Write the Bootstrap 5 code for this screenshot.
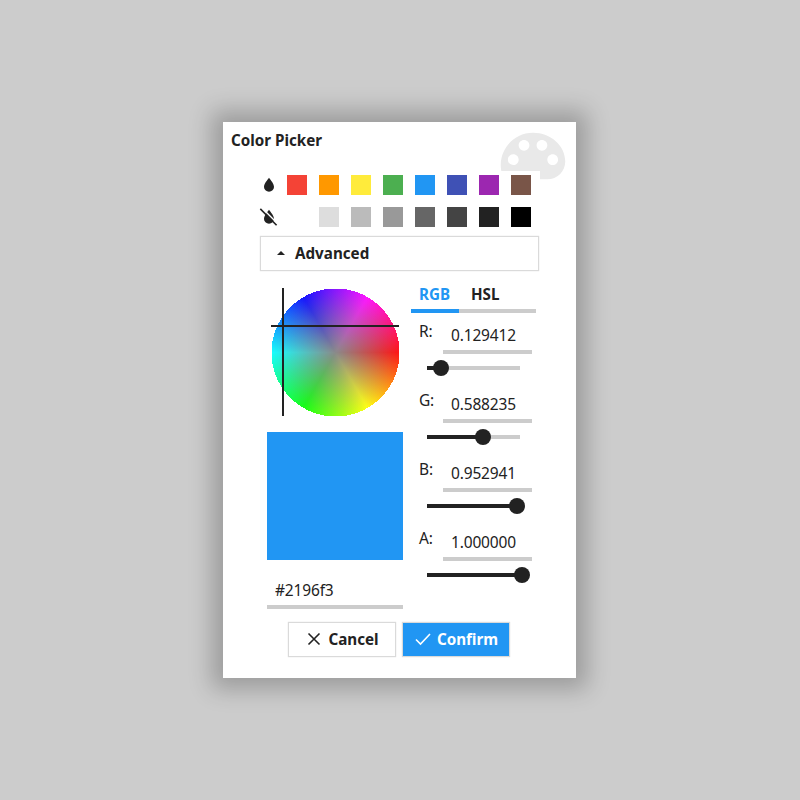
<!DOCTYPE html>
<html lang="en">
<head>
<meta charset="utf-8">
<meta name="viewport" content="width=device-width, initial-scale=1">
<title>Color Picker</title>
<link href="https://cdn.jsdelivr.net/npm/bootstrap@5.3.0/dist/css/bootstrap.min.css" rel="stylesheet">
<style>
  body { background: #ccc; color: #222; font: 15.5px/20px "Noto Sans", sans-serif; letter-spacing: -.16px; }
  .dialog { width: 353px; height: 556px; margin-right: 1px; background: #fff; box-shadow: 0 0 22px 11px rgba(0,0,0,.24); padding: 8px; }
  .dialog-title { font-size: 15.2px; line-height: 20px; font-weight: 700; margin: 0; height: 41px; letter-spacing: 0; }
  .palette-mark { position: absolute; top: 0; right: 0; width: 86px; height: 86px; fill: #e9e9e9; }
  .swatches { width: 287px; background: #fff; margin-left: 22px; height: 64px; }
  .cell { flex: 0 0 32px; height: 32px; padding: 4px 2px 8px; }
  .cell-icon { padding-left: 6px; }
  .cell svg { width: 20px; height: 20px; display: block; overflow: visible; }
  .chip { width: 20px; height: 20px; border: 0; padding: 0; display: block; }
  .key { height: 35px; border: 1px solid #dadada; border-radius: 0; box-shadow: 0 0 1px rgba(0,0,0,.18); font-size: 15.2px; line-height: 20px; font-weight: 700; letter-spacing: 0; color: #222; background: #fff; padding: 0 0 2px; }
  .key:hover { color: #222; border-color: #dadada; }
  .key-main, .key-main:hover { background: #2196f3; color: #fff; }
  .key-adv { width: 279px; margin: 1px 0 0 29px; padding-left: 10px; }
  .key-adv svg { width: 20px; height: 20px; margin-right: 4px; }
  .key-act { width: 108px; padding-right: 1px; }
  .key-act svg { width: 20px; height: 20px; margin-right: 4px; }
  .panels { margin: 17px 0 0 36px; height: 321px; }
  .left-col { width: 136px; }
  .wheel-box { width: 128px; height: 128px; margin-left: 4px; }
  .wheel { width: 128px; height: 128px;
    background: radial-gradient(circle 64px at 64.5px 64.5px, hsl(0,0%,54.1%), hsla(0,0%,54.1%,0)),
      conic-gradient(from 90deg at 64.5px 64.5px, hsl(0,100%,54.1%), hsl(60,100%,54.1%), hsl(120,100%,54.1%), hsl(180,100%,54.1%), hsl(240,100%,54.1%), hsl(300,100%,54.1%), hsl(360,100%,54.1%));
    -webkit-mask: radial-gradient(circle 64px at 64.5px 64.5px, #000 100%, transparent 100%);
    mask: radial-gradient(circle 64px at 64.5px 64.5px, #000 100%, transparent 100%); }
  .cross-v, .cross-h { position: absolute; background: #222; }
  .cross-v { left: 11px; top: 0; width: 2px; height: 128px; }
  .cross-h { left: 0; top: 37px; width: 128px; height: 2px; }
  .preview { height: 128px; margin-top: 16px; background: #2196f3; }
  .field { border: 0; border-bottom: 4px solid #ccc; border-radius: 0; padding: 0 8px; background: none; color: #222; font: inherit; letter-spacing: inherit; outline: 0; display: block; }
  .field-hex { width: 136px; height: 37px; margin-top: 12px; padding-top: 2px; }
  .right-col { width: 125px; margin-left: 8px; }
  .mode-tabs { height: 25px; border-bottom: 4px solid #ccc; font-size: 15.2px; letter-spacing: 0; }
  .mode-tabs a { color: #222; font-weight: 700; text-decoration: none; padding: 0 8px; height: 25px; line-height: 13px; margin-right: 4px; border-bottom: 4px solid transparent; }
  .mode-tabs a.on { color: #2196f3; border-color: #2196f3; width: 48px; }
  .channel { height: 69px; padding-left: 8px; }
  .channel label { width: 24px; padding-top: 8px; }
  .channel .field { width: 89px; height: 41px; padding-top: 7px; }
  .slide { width: 93px; height: 4px; margin: 12px 0 0 8px; background: #ccc; }
  .fill { height: 4px; background: #222; position: relative; }
  .fill::after { content: ""; position: absolute; right: -8px; top: -6px; width: 16px; height: 16px; border-radius: 50%; background: #222; }
  .actions { margin-top: 13px; gap: 6px; padding-right: 1px; }
</style>
</head>
<body class="vh-100 overflow-hidden d-flex align-items-center justify-content-center">
<main class="dialog position-relative">
  <svg class="palette-mark" viewBox="0 0 24 24"><path d="M12 3c-4.970 0-9 4.030-9 9s4.030 9 9 9c.83 0 1.500-.67 1.500-1.500 0-.39-.15-.74-.39-1.010-.23-.26-.38-.61-.38-.99 0-.83.67-1.500 1.500-1.500H16c2.760 0 5-2.240 5-5 0-4.420-4.030-8-9-8zm-5.500 9c-.83 0-1.500-.67-1.500-1.500S5.670 9 6.500 9 8 9.670 8 10.500 7.330 12 6.500 12zm3-4C8.670 8 8 7.330 8 6.500S8.670 5 9.500 5s1.500.67 1.500 1.500S10.330 8 9.500 8zm5 0c-.83 0-1.500-.67-1.500-1.500S13.670 5 14.500 5s1.500.67 1.500 1.500S15.330 8 14.500 8zm3 4c-.83 0-1.500-.67-1.500-1.500S16.670 9 17.500 9s1.500.67 1.500 1.500-.67 1.500-1.500 1.500z"/></svg>
  <h1 class="dialog-title">Color Picker</h1>
  <div class="swatches position-relative">
    <div class="d-flex" id="hues">
      <div class="cell cell-icon"><svg viewBox="0 0 20 20"><path fill="#222" d="M10 2.700C11.800 5.300 15 8.600 15 12A5 4.700 0 0 1 5 12C5 8.600 8.200 5.300 10 2.700z"/></svg></div>
    </div>
    <div class="d-flex" id="grays">
      <div class="cell cell-icon"><svg viewBox="0 0 20 20"><path fill="#222" d="M10 2.700C11.800 5.300 15 8.600 15 12A5 4.700 0 0 1 5 12C5 8.600 8.200 5.300 10 2.700z"/><path d="M3.500 1.500L18.500 16.500" stroke="#fff" stroke-width="1.400"/><path d="M1.300 1.900L17.600 18.200" stroke="#222" stroke-width="1.600"/></svg></div>
    </div>
  </div>
  <button class="btn key key-adv d-flex align-items-center"><svg viewBox="0 0 20 20"><path fill="#222" d="M6 12L10 8l4 4z"/></svg>Advanced</button>
  <div class="panels d-flex align-items-start">
    <div class="left-col">
      <div class="wheel-box position-relative"><div class="wheel"></div><div class="cross-v"></div><div class="cross-h"></div></div>
      <div class="preview"></div>
      <input class="field field-hex" value="#2196f3" aria-label="Hex">
    </div>
    <div class="right-col">
      <nav class="mode-tabs d-flex"><a class="on" href="#">RGB</a><a href="#">HSL</a></nav>
      <div id="channels"></div>
    </div>
  </div>
  <div class="actions d-flex justify-content-center">
    <button class="btn key key-act d-flex align-items-center justify-content-center"><svg viewBox="0 0 20 20" fill="none" stroke="#222" stroke-width="1.600"><path d="M4.500 4.500l11 11M15.500 4.500l-11 11"/></svg>Cancel</button>
    <button class="btn key key-act key-main d-flex align-items-center justify-content-center"><svg viewBox="0 0 20 20" fill="none" stroke="#fff" stroke-width="1.600"><path d="M3 10.500l4.500 4.500L17 5"/></svg>Confirm</button>
  </div>
</main>
<script>
  const addChips = (id, colors) => colors.forEach(c =>
    document.getElementById(id).insertAdjacentHTML('beforeend', `<div class="cell"><button class="chip" aria-label="${c}" style="background:${c}"></button></div>`));
  addChips('hues', ['#f44336', '#ff9800', '#ffeb3b', '#4caf50', '#2196f3', '#3f51b5', '#9c27b0', '#795548']);
  addChips('grays', ['#ffffff', '#dddddd', '#bbbbbb', '#999999', '#666666', '#444444', '#222222', '#000000']);
  [['R', '0.129412', 14], ['G', '0.588235', 56], ['B', '0.952941', 90], ['A', '1.000000', 95]].forEach(([n, v, w]) =>
    document.getElementById('channels').insertAdjacentHTML('beforeend',
      `<div class="channel"><div class="d-flex"><label>${n}:</label><input class="field" value="${v}" aria-label="${n}"></div><div class="slide"><div class="fill" style="width:${w}px"></div></div></div>`));
</script>
</body>
</html>
